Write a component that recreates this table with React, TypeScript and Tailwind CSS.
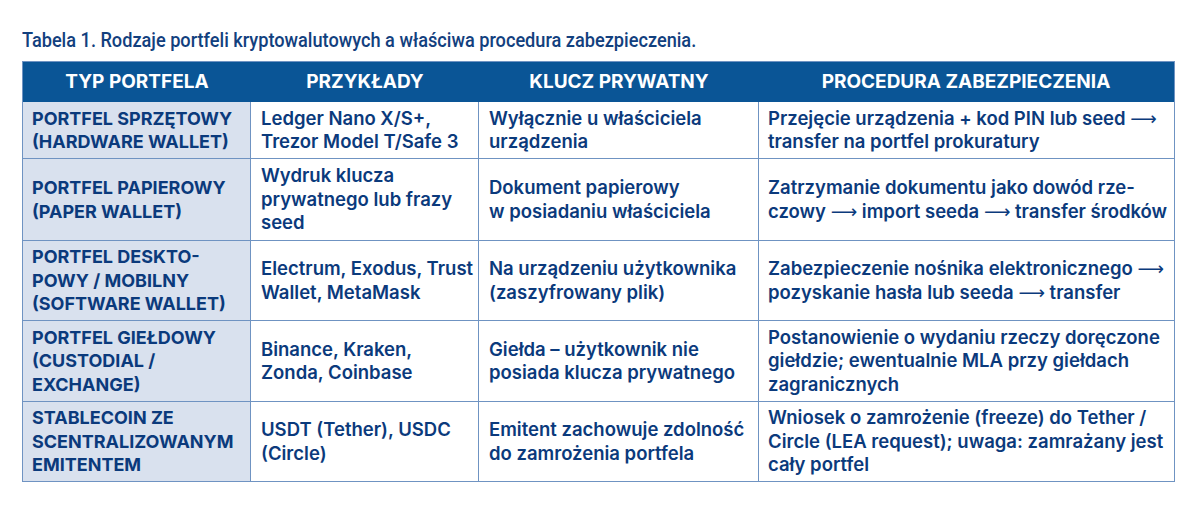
import React from "react";

const A = "\u27F6";

const rows: { h: string; type: string[]; ex: string[]; key: string[]; proc: string[] }[] = [
  {
    h: "h-[56px]",
    type: ["PORTFEL SPRZĘTOWY", "(HARDWARE WALLET)"],
    ex: ["Ledger Nano X/S+,", "Trezor Model T/Safe 3"],
    key: ["Wyłącznie u właściciela", "urządzenia"],
    proc: [`Przejęcie urządzenia + kod PIN lub seed ${A}`, "transfer na portfel prokuratury"],
  },
  {
    h: "h-[82px]",
    type: ["PORTFEL PAPIEROWY", "(PAPER WALLET)"],
    ex: ["Wydruk klucza", "prywatnego lub frazy", "seed"],
    key: ["Dokument papierowy", "w posiadaniu właściciela"],
    proc: ["Zatrzymanie dokumentu jako dowód rze-", `czowy ${A} import seeda ${A} transfer środków`],
  },
  {
    h: "h-[80px]",
    type: ["PORTFEL DESKTO-", "POWY / MOBILNY", "(SOFTWARE WALLET)"],
    ex: ["Electrum, Exodus, Trust", "Wallet, MetaMask"],
    key: ["Na urządzeniu użytkownika", "(zaszyfrowany plik)"],
    proc: [`Zabezpieczenie nośnika elektronicznego ${A}`, `pozyskanie hasła lub seeda ${A} transfer`],
  },
  {
    h: "h-[81px]",
    type: ["PORTFEL GIEŁDOWY", "(CUSTODIAL /", "EXCHANGE)"],
    ex: ["Binance, Kraken,", "Zonda, Coinbase"],
    key: ["Giełda – użytkownik nie", "posiada klucza prywatnego"],
    proc: ["Postanowienie o wydaniu rzeczy doręczone", "giełdzie; ewentualnie MLA przy giełdach", "zagranicznych"],
  },
  {
    h: "h-[80px]",
    type: ["STABLECOIN ZE", "SCENTRALIZOWANYM", "EMITENTEM"],
    ex: ["USDT (Tether), USDC", "(Circle)"],
    key: ["Emitent zachowuje zdolność", "do zamrożenia portfela"],
    proc: ["Wniosek o zamrożenie (freeze) do Tether /", "Circle (LEA request); uwaga: zamrażany jest", "cały portfel"],
  },
];

function Line({ text }: { text: string }) {
  const parts = text.split(A);
  return (
    <span className="whitespace-nowrap">
      {parts.map((p, i) => (
        <React.Fragment key={i}>
          {p}
          {i < parts.length - 1 && (
            <span className="font-normal" style={{ fontFamily: '"DejaVu Sans", sans-serif' }}>
              {A}
            </span>
          )}
        </React.Fragment>
      ))}
    </span>
  );
}

function Lines({ lines }: { lines: string[] }) {
  return (
    <div className="flex flex-col">
      {lines.map((l, i) => (
        <Line key={i} text={l} />
      ))}
    </div>
  );
}

export default function App() {
  return (
    <div className="w-[1200px] h-[518px] bg-white pt-[27px] pl-[22px]">
      <div
        className="text-[21px] leading-[26px] font-medium text-[#12407e] mb-[8px] whitespace-nowrap origin-left scale-x-[0.865]"
        style={{ fontFamily: "Roboto, sans-serif" }}
      >
        Tabela 1. Rodzaje portfeli kryptowalutowych a właściwa procedura zabezpieczenia.
      </div>
      <div
        className="w-[1153px] border-[1.5px] border-[#6f93c2] text-[18.5px] leading-[23.5px] text-[#0b3a7c] font-semibold"
        style={{ fontFamily: "Inter, sans-serif" }}
      >
        <div className="grid grid-cols-[228px_228px_280px_414px] h-[40px] bg-[#0a5596] text-white text-[19px] font-bold items-center text-center">
          <div>TYP PORTFELA</div>
          <div>PRZYKŁADY</div>
          <div>KLUCZ PRYWATNY</div>
          <div>PROCEDURA ZABEZPIECZENIA</div>
        </div>
        {rows.map((r, i) => (
          <div
            key={i}
            className={`grid grid-cols-[228px_228px_280px_414px] ${r.h} ${i > 0 ? "border-t-[1.5px] border-[#6f93c2]" : ""}`}
          >
            <div className="bg-[#d9e1ee] border-r-[1.5px] border-[#6f93c2] px-[9px] flex items-center font-bold text-[18px]">
              <Lines lines={r.type} />
            </div>
            <div className="border-r-[1.5px] border-[#6f93c2] px-[10px] flex items-center">
              <Lines lines={r.ex} />
            </div>
            <div className="border-r-[1.5px] border-[#6f93c2] px-[10px] flex items-center">
              <Lines lines={r.key} />
            </div>
            <div className="px-[9px] flex items-center">
              <Lines lines={r.proc} />
            </div>
          </div>
        ))}
      </div>
    </div>
  );
}
